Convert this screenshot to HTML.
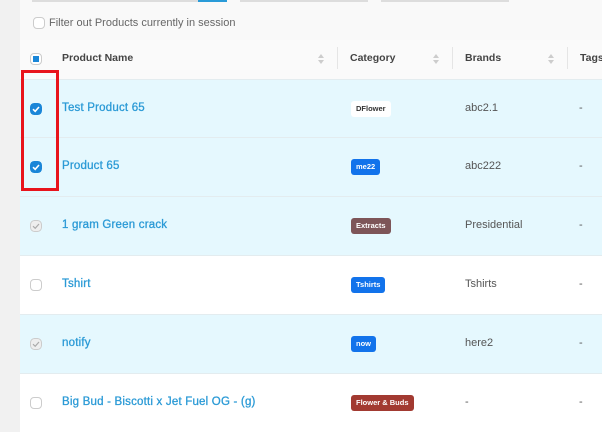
<!DOCTYPE html>
<html><head><style>
*{margin:0;padding:0;box-sizing:border-box}
body{width:602px;height:432px;overflow:hidden;background:#f9f9f9;font-family:"Liberation Sans",sans-serif;position:relative}
.side{position:absolute;left:0;top:0;width:20px;height:432px;background:#f1f1f1}
.inp{position:absolute;top:0;height:2px;background:#ddd}
.cb{position:absolute;width:12px;height:12px;border:1px solid #ccc;border-radius:4px;background:#fff}
.abs{position:absolute;white-space:nowrap}
.row{position:absolute;left:20px;width:582px;height:59px;border-top:1px solid #e3ecef}
.cy{background:#e5f8fe}.wh{background:#fff}
.name{position:absolute;left:42px;top:22px;color:#2b9ad6;font-size:11.5px;letter-spacing:.2px;-webkit-text-stroke:.3px #2b9ad6}
.badge{position:absolute;left:331px;top:21px;height:16px;line-height:16px;padding:0 5px;border-radius:3px;font-size:7.5px;font-weight:bold;color:#fff}
.brand{position:absolute;left:445px;top:22px;color:#555;font-size:11px}
.tag{position:absolute;left:559px;top:22px;color:#555;font-size:11px}
.chk{position:absolute;left:10px;top:23px;width:12px;height:12px;border-radius:4px}
.sort{position:absolute;top:53px;width:6px;height:12px}
.hd{position:absolute;top:52px;font-size:10.5px;font-weight:bold;color:#444}
.div{position:absolute;top:47px;width:1px;height:22px;background:#e5e5e5}
</style></head><body>
<div class="side"></div>
<div class="inp" style="left:32px;width:195px"></div>
<div class="inp" style="left:198px;width:29px;background:#2a9bd8"></div>
<div class="inp" style="left:240px;width:128px"></div>
<div class="inp" style="left:381px;width:128px"></div>
<div class="cb" style="left:33px;top:17px"></div>
<div class="abs" style="left:49px;top:17px;font-size:11px;color:#666">Filter out Products currently in session</div>
<div style="position:absolute;left:20px;top:40px;width:582px;height:39px;background:#fafafa"></div>
<div class="cb" style="left:30px;top:53px;border-color:#ccc"><div style="position:absolute;left:2px;top:2px;width:6px;height:6px;background:#1a86d8"></div></div>
<div class="hd" style="left:62px">Product Name</div>
<div class="hd" style="left:350px">Category</div>
<div class="hd" style="left:465px">Brands</div>
<div class="hd" style="left:580px">Tags</div>
<div class="div" style="left:337px"></div><div class="div" style="left:452px"></div><div class="div" style="left:567px"></div>
<svg class="sort" style="left:318px" viewBox="0 0 6 12"><path d="M0 5L3 1 6 5z M0 7L3 11 6 7z" fill="#ccc"/></svg>
<svg class="sort" style="left:433px" viewBox="0 0 6 12"><path d="M0 5L3 1 6 5z M0 7L3 11 6 7z" fill="#ccc"/></svg>
<svg class="sort" style="left:548px" viewBox="0 0 6 12"><path d="M0 5L3 1 6 5z M0 7L3 11 6 7z" fill="#ccc"/></svg>

<div class="row cy" style="top:79px"><svg class="chk" viewBox="0 0 12 12"><rect width="12" height="12" rx="4" fill="#1a86d8"/><path d="M3 6.2L5.2 8.3 9 4" stroke="#fff" stroke-width="1.6" fill="none"/></svg><div class="name">Test Product 65</div><div class="badge" style="background:#fff;color:#333">DFlower</div><div class="brand">abc2.1</div><div class="tag">-</div></div>
<div class="row cy" style="top:137px"><svg class="chk" viewBox="0 0 12 12"><rect width="12" height="12" rx="4" fill="#1a86d8"/><path d="M3 6.2L5.2 8.3 9 4" stroke="#fff" stroke-width="1.6" fill="none"/></svg><div class="name">Product 65</div><div class="badge" style="background:#1273eb">me22</div><div class="brand">abc222</div><div class="tag">-</div></div>
<div class="row cy" style="top:196px"><svg class="chk" viewBox="0 0 12 12"><rect x=".5" y=".5" width="11" height="11" rx="4" fill="#eee" stroke="#ccc"/><path d="M3 6.2L5.2 8.3 9 4" stroke="#aaa" stroke-width="1.2" fill="none"/></svg><div class="name">1 gram Green crack</div><div class="badge" style="background:#7d5558">Extracts</div><div class="brand">Presidential</div><div class="tag">-</div></div>
<div class="row wh" style="top:255px"><div class="chk" style="border:1px solid #ccc;background:#fff"></div><div class="name">Tshirt</div><div class="badge" style="background:#1273eb">Tshirts</div><div class="brand">Tshirts</div><div class="tag">-</div></div>
<div class="row cy" style="top:314px"><svg class="chk" viewBox="0 0 12 12"><rect x=".5" y=".5" width="11" height="11" rx="4" fill="#eee" stroke="#ccc"/><path d="M3 6.2L5.2 8.3 9 4" stroke="#aaa" stroke-width="1.2" fill="none"/></svg><div class="name">notify</div><div class="badge" style="background:#1273eb">now</div><div class="brand">here2</div><div class="tag">-</div></div>
<div class="row wh" style="top:373px"><div class="chk" style="border:1px solid #ccc;background:#fff"></div><div class="name">Big Bud - Biscotti x Jet Fuel OG - (g)</div><div class="badge" style="background:#a23a31">Flower &amp; Buds</div><div class="brand">-</div><div class="tag">-</div></div>

<div style="position:absolute;left:21px;top:70px;width:38px;height:121px;border:3px solid #e8141c"></div>
</body></html>
